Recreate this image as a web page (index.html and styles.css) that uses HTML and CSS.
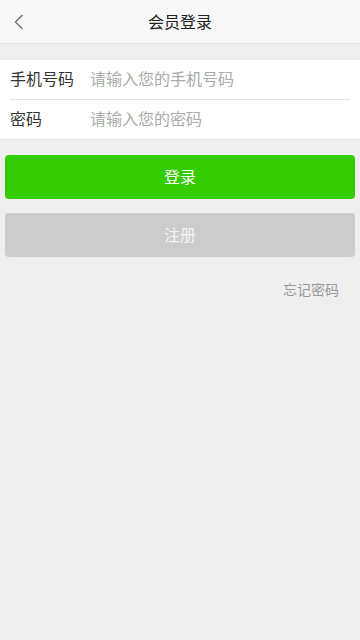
FILE: index.html
```html
<!DOCTYPE html>
<html lang="zh">
<head>
<meta charset="utf-8">
<meta name="viewport" content="width=device-width, initial-scale=1">
<title>会员登录</title>
<link rel="stylesheet" href="styles.css">
</head>
<body>
<header class="topbar">
  <button class="back" aria-label="返回">
    <svg width="12" height="16" viewBox="0 0 12 16"><path d="M9 1.5 L2.5 8 L9 14.5" fill="none" stroke="#777" stroke-width="1.6" stroke-linecap="round" stroke-linejoin="round"/></svg>
  </button>
  <h1 class="title">会员登录</h1>
</header>
<main class="content">
  <div class="form">
    <div class="row">
      <label class="label">手机号码</label>
      <span class="input">请输入您的手机号码</span>
    </div>
    <div class="row">
      <label class="label">密码</label>
      <span class="input">请输入您的密码</span>
    </div>
  </div>
  <div class="actions">
    <button class="btn btn-login">登录</button>
    <button class="btn btn-register">注册</button>
  </div>
  <div class="forgot"><a class="forgot-link">忘记密码</a></div>
</main>
</body>
</html>
```
FILE: styles.css
```css
* { box-sizing: border-box; }
html, body { margin: 0; padding: 0; }
body {
  width: 360px;
  min-height: 640px;
  background: #efefef;
  font-family: "Noto Sans CJK SC", "Noto Sans", sans-serif;
}
.topbar {
  height: 44px;
  background: #f8f8f8;
  border-bottom: 1px solid #e4e4e4;
  display: flex;
  align-items: center;
  justify-content: center;
  position: relative;
  padding-bottom: 2px;
}
.back {
  position: absolute;
  left: 10px;
  top: 14px;
  padding: 0 3px;
  border: 0;
  background: none;
  height: 16px;
  display: flex;
}
.title {
  margin: 0;
  font-size: 16px;
  font-weight: normal;
  color: #222;
  line-height: 20px;
}
.content { padding-top: 16px; }
.form {
  background: #fff;
  padding: 0 10px;
  border-bottom: 1px solid #e6e6e6;
}
.row {
  height: 39px;
  display: flex;
  align-items: center;
  font-size: 16px;
  padding-bottom: 3px;
}
.row + .row { border-top: 1px solid #e3e3e3; height: 40px; }
.label {
  width: 80px;
  color: #333;
}
.input { color: #aaa; }
.actions {
  padding: 15px 5px 0;
  display: flex;
  flex-direction: column;
  gap: 14px;
}
.btn {
  height: 44px;
  border: 0;
  border-radius: 4px;
  color: #fff;
  font-size: 16px;
  font-family: inherit;
  padding: 0 0 3px;
}
.btn-login { background: #33cc00; }
.btn-register { background: #cccccc; color: #f4f4f4; }
.forgot {
  display: flex;
  justify-content: flex-end;
  padding: 23px 21px 0 0;
}
.forgot-link {
  font-size: 14px;
  color: #999;
  line-height: 18px;
}
```
